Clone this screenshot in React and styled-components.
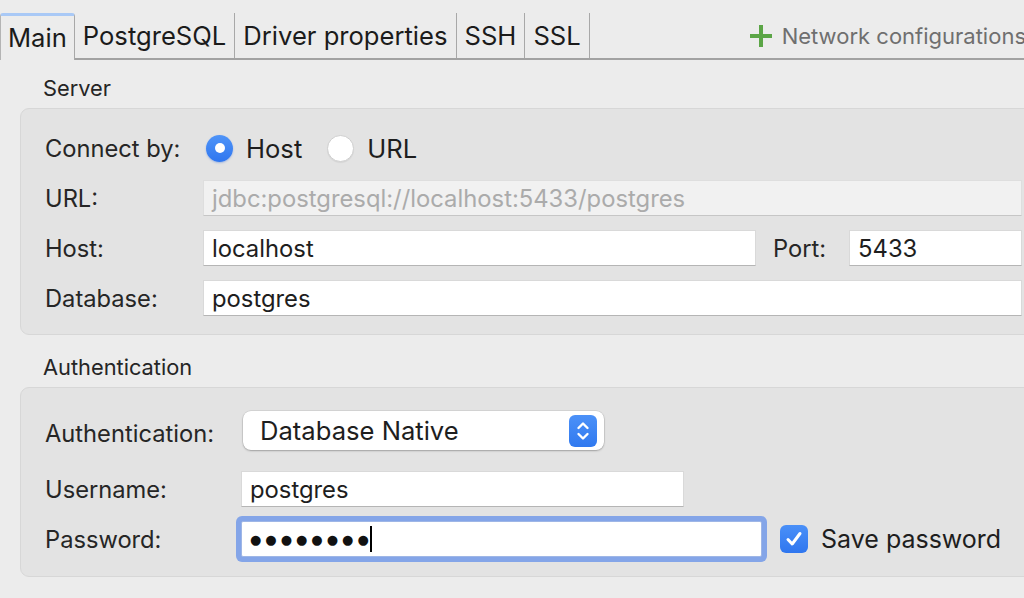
import React from "react";
import styled, { createGlobalStyle, css } from "styled-components";

const GlobalStyle = createGlobalStyle`
  html, body { margin: 0; padding: 0; background: #ececec; overflow: hidden; }
  body {
    font-family: Inter, "Helvetica Neue", "Liberation Sans", Arial, sans-serif;
    -webkit-font-smoothing: antialiased;
    color: #1f1f1f;
  }
`;

const Page = styled.div`
  width: 1056px;
  height: 598px;
  background: #ececec;
  overflow: hidden;
`;

const TabBar = styled.div`
  display: flex;
  align-items: flex-end;
  box-sizing: border-box;
  height: 60px;
  padding-top: 13px;
  border-bottom: 2px solid #a2a2a2;
`;

const Tab = styled.div`
  display: flex;
  align-items: center;
  box-sizing: border-box;
  height: 45px;
  padding: 0 8px;
  font-size: 25.6px;
  color: #1b1b1b;
  border-right: 1px solid #a8a8a8;
  white-space: nowrap;
  ${(p) =>
    p.$active &&
    css`
      position: relative;
      height: 47px;
      margin-bottom: -2px;
      padding: 0 7px 2px 7px;
      background: #ececec;
      border-top: 3px solid #a9c9f6;
      border-left: 1px solid #b4b4b4;
      border-top-left-radius: 3px;
      border-top-right-radius: 3px;
    `}
`;

const NetworkButton = styled.div`
  display: flex;
  align-items: center;
  gap: 9px;
  height: 45px;
  margin-left: 159px;
  font-size: 22px;
  color: #6f6f6f;
  white-space: nowrap;
`;

const Content = styled.div`
  padding: 16px 20px 0 20px;
`;

const SectionTitle = styled.div`
  font-size: 21.8px;
  line-height: 24px;
  color: #252525;
  margin: ${(p) => (p.$first ? "0" : "20px")} 0 8px 23px;
`;

const Group = styled.div`
  box-sizing: border-box;
  background: #e3e3e3;
  border: 1px solid #d7d7d7;
  border-radius: 9px;
  padding: ${(p) => p.$pad};
  display: grid;
  grid-template-columns: ${(p) => p.$labelWidth}px 1fr;
  row-gap: ${(p) => p.$gap}px;
  align-items: center;
`;

const Label = styled.div`
  font-size: 23.7px;
  color: #262626;
  white-space: nowrap;
  padding-top: ${(p) => p.$shift || 0}px;
`;

const Row = styled.div`
  display: flex;
  align-items: center;
  height: ${(p) => p.$h || 36}px;
`;

const Field = styled.div`
  box-sizing: border-box;
  height: 36px;
  display: flex;
  align-items: center;
  padding: 0 8px;
  font-size: 23.8px;
  background: ${(p) => (p.$disabled ? "#f1f1f1" : "#ffffff")};
  color: ${(p) => (p.$disabled ? "#ababab" : "#1e1e1e")};
  border: 1px solid ${(p) => (p.$disabled ? "#dedede" : "#d9d9d9")};
  border-bottom-color: ${(p) => (p.$disabled ? "#c6c6c6" : "#b5b5b5")};
  width: ${(p) => (p.$w ? `${p.$w}px` : "auto")};
  flex: ${(p) => (p.$w ? "none" : "1")};
  white-space: nowrap;
  overflow: hidden;
  ${(p) =>
    p.$focused &&
    css`
      border-color: #9eb6e6;
      box-shadow: 0 0 0 5px #84a5e8;
      border-radius: 2px;
    `}
`;

const RadioOption = styled.div`
  display: flex;
  align-items: center;
  gap: 13px;
  font-size: 25.6px;
  color: #1e1e1e;
  margin-right: 25px;
  margin-left: ${(p) => p.$indent || 0}px;
`;

const RadioDot = styled.span`
  box-sizing: border-box;
  width: 27px;
  height: 27px;
  border-radius: 50%;
  display: inline-flex;
  align-items: center;
  justify-content: center;
  ${(p) =>
    p.$checked
      ? css`
          background: linear-gradient(#4f94f8, #2f76ef);
          box-shadow: 0 1px 2px rgba(40, 100, 220, 0.35);
          &::after {
            content: "";
            width: 10px;
            height: 10px;
            border-radius: 50%;
            background: #fff;
          }
        `
      : css`
          background: #ffffff;
          border: 1px solid #cfcfcf;
          box-shadow: 0 1px 1px rgba(0, 0, 0, 0.06);
        `}
`;

const PortLabel = styled(Label)`
  margin: 0 23px 0 17px;
`;

const Select = styled.div`
  box-sizing: border-box;
  width: 361px;
  height: 39px;
  margin-left: 2px;
  display: flex;
  align-items: center;
  justify-content: space-between;
  padding: 0 7px 0 17px;
  background: #ffffff;
  border-radius: 8px;
  box-shadow: 0 0 0 0.5px rgba(0, 0, 0, 0.12), 0 1px 2px rgba(0, 0, 0, 0.25);
  font-size: 25.6px;
  color: #1e1e1e;
`;

const Stepper = styled.span`
  width: 28px;
  height: 32px;
  border-radius: 6px;
  background: linear-gradient(#4c91f8, #3079ef);
  display: inline-flex;
  align-items: center;
  justify-content: center;
`;

const PasswordText = styled.span`
  display: inline-flex;
  align-items: center;
  height: 100%;
  font-family: "DejaVu Sans", sans-serif;
  font-size: 13px;
  letter-spacing: 4px;
  color: #111;
`;

const Caret = styled.span`
  width: 2px;
  height: 26px;
  background: #000;
  margin-left: -3px;
`;

const CheckOption = styled.div`
  display: flex;
  align-items: center;
  gap: 13px;
  margin-left: 18px;
  font-size: 25px;
  color: #1e1e1e;
  white-space: nowrap;
`;

const CheckBox = styled.span`
  width: 28px;
  height: 28px;
  border-radius: 6px;
  background: linear-gradient(#4a90f8, #2f76ef);
  display: inline-flex;
  align-items: center;
  justify-content: center;
`;

export default function App() {
  return (
    <Page>
      <GlobalStyle />
      <TabBar>
        <Tab $active>Main</Tab>
        <Tab>PostgreSQL</Tab>
        <Tab>Driver properties</Tab>
        <Tab>SSH</Tab>
        <Tab>SSL</Tab>
        <NetworkButton>
          <svg width="24" height="24" viewBox="0 0 24 24">
            <path d="M12 1v22M1 12h22" stroke="#5ba546" strokeWidth="4" />
          </svg>
          Network configurations
        </NetworkButton>
      </TabBar>
      <Content>
        <SectionTitle $first>Server</SectionTitle>
        <Group $pad="21px 13px 18px 24px" $labelWidth={158} $gap={14}>
          <Label>Connect by:</Label>
          <Row>
            <RadioOption $indent={3}>
              <RadioDot $checked />
              Host
            </RadioOption>
            <RadioOption>
              <RadioDot />
              URL
            </RadioOption>
          </Row>
          <Label>URL:</Label>
          <Row>
            <Field $disabled>jdbc:postgresql://localhost:5433/postgres</Field>
          </Row>
          <Label>Host:</Label>
          <Row>
            <Field $w={553}>localhost</Field>
            <PortLabel>Port:</PortLabel>
            <Field>5433</Field>
          </Row>
          <Label>Database:</Label>
          <Row>
            <Field>postgres</Field>
          </Row>
        </Group>

        <SectionTitle>Authentication</SectionTitle>
        <Group $pad="23px 13px 19px 24px" $labelWidth={196} $gap={0}>
          <Label $shift={5}>Authentication:</Label>
          <Row $h={39}>
            <Select>
              Database Native
              <Stepper>
                <svg width="16" height="24" viewBox="0 0 16 24">
                  <path
                    d="M3.5 9 L8 4.5 L12.5 9 M3.5 15 L8 19.5 L12.5 15"
                    stroke="#fff"
                    strokeWidth="2.4"
                    fill="none"
                    strokeLinecap="round"
                    strokeLinejoin="round"
                  />
                </svg>
              </Stepper>
            </Select>
          </Row>
          <Label style={{ marginTop: 21 }}>Username:</Label>
          <Row style={{ marginTop: 21 }}>
            <Field $w={443}>postgres</Field>
          </Row>
          <Label style={{ marginTop: 14 }}>Password:</Label>
          <Row style={{ marginTop: 14 }}>
            <Field $w={521} $focused>
              <PasswordText>●●●●●●●●</PasswordText>
              <Caret />
            </Field>
            <CheckOption>
              <CheckBox>
                <svg width="20" height="20" viewBox="0 0 20 20">
                  <path
                    d="M4 10.5 L8.2 15 L16 4.5"
                    stroke="#fff"
                    strokeWidth="3"
                    fill="none"
                    strokeLinecap="round"
                    strokeLinejoin="round"
                  />
                </svg>
              </CheckBox>
              Save password
            </CheckOption>
          </Row>
        </Group>
      </Content>
    </Page>
  );
}
